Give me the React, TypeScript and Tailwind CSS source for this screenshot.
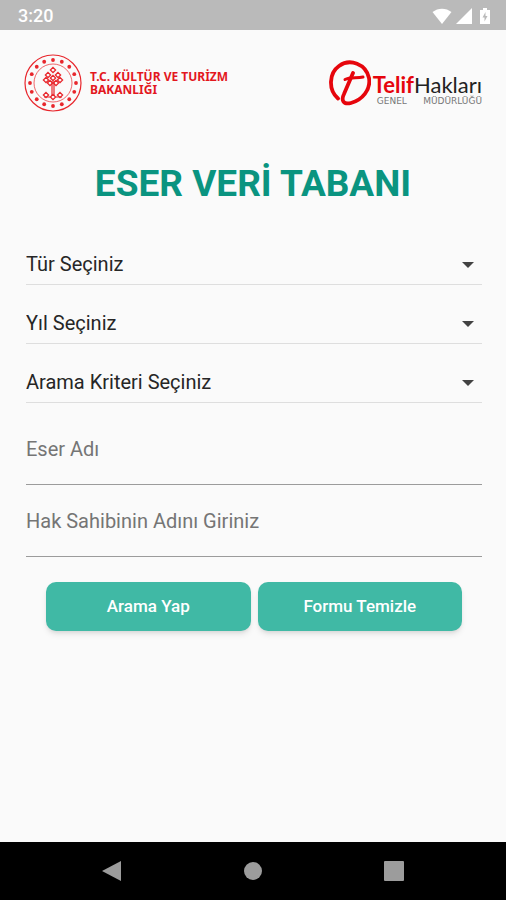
import { useState } from "react";

const dots = Array.from({ length: 16 }, (_, i) => {
  const angle = (i * Math.PI) / 8;
  return { x: 29 + 23 * Math.sin(angle), y: 29 - 23 * Math.cos(angle) };
});

// Centres of the small knots that make up the tree in the emblem
const knots = [
  [29, 16], [24, 21], [34, 21], [29, 24], [22, 26], [36, 26],
  [26, 29], [32, 29], [22, 41], [36, 41], [29, 43],
];

function Emblem() {
  return (
    <svg viewBox="0 0 58 58" className="size-[58px] shrink-0" fill="none" stroke="#e8262c" aria-hidden="true">
      <circle cx="29" cy="29" r="28" strokeWidth="1.2" />
      <circle cx="29" cy="29" r="19" strokeWidth="0.7" />
      {dots.map((dot, index) => (
        <circle key={index} cx={dot.x} cy={dot.y} r="1.9" fill="#e8262c" stroke="none" />
      ))}
      {knots.map(([x, y], index) => (
        <path key={index} d={`M${x} ${y - 2.6}l2.6 2.6-2.6 2.6-2.6-2.6z`} strokeWidth="1.3" />
      ))}
      <path d="M28 27v15M30 27v15M20 43h6M32 43h6" strokeWidth="1.2" />
    </svg>
  );
}

function TelifMark() {
  return (
    <svg viewBox="0 0 42 46" className="h-[46px] w-[42px] shrink-0" fill="none" stroke="#e6050c" strokeLinecap="round" aria-hidden="true">
      <path d="M9 38.500C-1 30 0 13 10 6C21 -2 37 4 40 18C42 30 33 40 22 43C14 45 12 40 15 34C18 27 21 20 24 13" strokeWidth="3.8" />
      <path d="M16 19.500C21 17 28 18.500 34 17" strokeWidth="3" />
    </svg>
  );
}

function StatusBar() {
  return (
    <div className="flex h-[30px] items-center justify-between bg-[#bababa] pt-[2px] pr-3 pl-[18px] text-white">
      <span className="text-lg font-medium">3:20</span>
      <div className="flex items-center gap-1" aria-hidden="true">
        <svg viewBox="0 0 20 16" className="h-4 w-5" fill="currentColor">
          <path d="M10 16L0.5 4C6 -0.5 14 -0.5 19.500 4z" />
        </svg>
        <svg viewBox="0 0 16 16" className="size-4" fill="currentColor">
          <path d="M16 0v16H0z" />
        </svg>
        <svg viewBox="0 0 18 16" className="h-4 w-[18px]" fill="currentColor">
          <path fillRule="evenodd" d="M7 0h4v2h3v14H4V2h3zM9.500 4L6.500 9.500H8.500V13.500L11.500 8H9.500z" />
        </svg>
      </div>
    </div>
  );
}

function Dropdown({ label }: { label: string }) {
  return (
    <div className="relative border-b border-[#dedede]">
      <select aria-label={label} className="h-[58px] w-full appearance-none bg-transparent pt-[18px] pr-10 text-xl text-[#262626] outline-none">
        <option>{label}</option>
      </select>
      <svg viewBox="0 0 12 6" className="pointer-events-none absolute right-2 bottom-4 h-[6px] w-3" fill="#424242" aria-hidden="true">
        <path d="M0 0h12L6 6z" />
      </svg>
    </div>
  );
}

function TextField(props: any) {
  return (
    <input
      type="text"
      aria-label={props.label}
      placeholder={props.label}
      value={props.value}
      onChange={(e) => props.onChange(e.target.value)}
      className="h-[72px] w-full border-b border-[#9b9b9b] bg-transparent text-xl text-[#262626] outline-none placeholder:text-[#757575]"
    />
  );
}

export default function App() {
  const [title, setTitle] = useState("");
  const [owner, setOwner] = useState("");

  const clearForm = () => {
    setTitle("");
    setOwner("");
  };

  const buttonClass = "h-[49px] flex-1 rounded-[10px] bg-[#40b9a5] text-[17px] font-medium text-white shadow-md";

  return (
    <div className="flex min-h-screen flex-col bg-[#fafafa] font-['Roboto',sans-serif]">
      <StatusBar />
      <main className="grow px-6">
        <header className="flex items-center justify-between pt-6">
          <div className="flex items-center gap-2">
            <Emblem />
            <p className="font-['Noto_Sans',sans-serif] text-xs leading-[13px] font-bold text-[#e3171e]">
              T.C. KÜLTÜR VE TURİZM
              <br />
              BAKANLIĞI
            </p>
          </div>
          <div className="flex items-center gap-[2px]">
            <TelifMark />
            <div className="pt-3">
              <p className="font-['Lato',sans-serif] text-[22px] leading-6 text-[#222222]">
                <span className="font-bold text-[#e6050c]">Telif</span>Hakları
              </p>
              <p className="flex justify-between pl-1 font-['DejaVu_Sans',sans-serif] text-[9px] leading-[9px] text-[#777777]">
                <span>GENEL</span>
                <span>MÜDÜRLÜĞÜ</span>
              </p>
            </div>
          </div>
        </header>
        <h1 className="pt-[52px] text-center text-[37px] leading-10 font-bold text-[#0a9480]">ESER VERİ TABANI</h1>
        <form className="pt-[22px] pl-[2px]" onSubmit={(e) => e.preventDefault()}>
          <Dropdown label="Tür Seçiniz" />
          <Dropdown label="Yıl Seçiniz" />
          <Dropdown label="Arama Kriteri Seçiniz" />
          <div className="pt-[10px]">
            <TextField label="Eser Adı" value={title} onChange={setTitle} />
            <TextField label="Hak Sahibinin Adını Giriniz" value={owner} onChange={setOwner} />
          </div>
          <div className="flex gap-[7px] px-5 pt-[25px]">
            <button type="submit" className={buttonClass}>Arama Yap</button>
            <button type="button" className={buttonClass} onClick={clearForm}>Formu Temizle</button>
          </div>
        </form>
      </main>
      <nav className="flex h-[58px] items-center justify-around bg-black px-[42px]">
        <button type="button" aria-label="Geri">
          <svg viewBox="0 0 20 20" className="size-5" fill="#9c9c9c"><path d="M19 0v20L0 10z" /></svg>
        </button>
        <button type="button" aria-label="Ana ekran">
          <svg viewBox="0 0 20 20" className="size-5" fill="#9c9c9c"><circle cx="10" cy="10" r="9" /></svg>
        </button>
        <button type="button" aria-label="Son uygulamalar">
          <svg viewBox="0 0 20 20" className="size-5" fill="#9c9c9c"><rect width="20" height="20" rx="1" /></svg>
        </button>
      </nav>
    </div>
  );
}
